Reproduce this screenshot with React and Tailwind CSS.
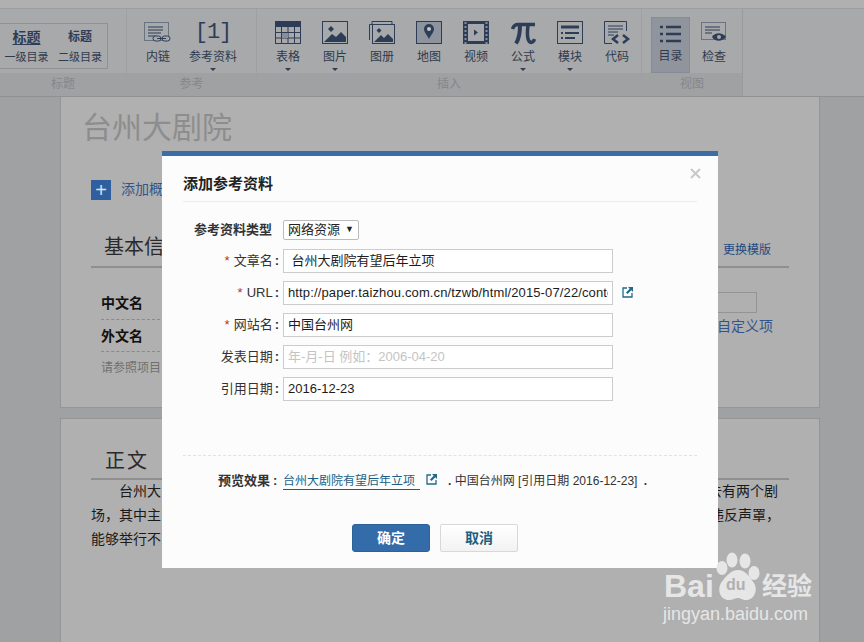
import React from 'react';

const cjk = "font-['Liberation_Sans','Noto_Sans_CJK_SC',sans-serif]";
const navy = '#2d3d58';

function ToolIcon({ name }) {
  const s = { fill: 'none', stroke: navy, strokeWidth: 1 };
  if (name === 'link') return (
    <svg width="28" height="22" viewBox="0 0 28 22"><rect x=".5" y=".5" width="24" height="18" fill="none" stroke={navy} strokeDasharray="1 1" /><path d="M4 5h15M4 8h15M4 11h13M4 14h8" stroke={navy} /><rect x="9" y="14" width="8" height="5" rx="2.5" fill="#a6a8ab" stroke={navy} /><rect x="18" y="14" width="8" height="5" rx="2.5" fill="#a6a8ab" stroke={navy} /><path d="M13 16.500h9" stroke={navy} /></svg>
  );
  if (name === 'table') return (
    <svg width="26" height="24" viewBox="0 0 26 24"><rect x=".5" y=".5" width="25" height="22" {...s} /><rect x="0" y="0" width="26" height="6" fill={navy} /><path d="M6.500 6v17M13 6v17M19.500 6v17M0 11.500h26M0 17h26" {...s} /><rect x="7" y="12" width="6" height="5" fill="#8b8e94" /></svg>
  );
  if (name === 'image') return (
    <svg width="26" height="24" viewBox="0 0 26 24"><rect x=".5" y=".5" width="25" height="22" {...s} /><path d="M2 21l8-8 4 3 5-5 5 5v5z" fill={navy} /><path d="M9 5l3 3-3 3-3-3z" fill={navy} /></svg>
  );
  if (name === 'album') return (
    <svg width="26" height="24" viewBox="0 0 26 24"><path d="M3 3V.500h20V3" {...s} /><path d="M.500 19V3.500H4" {...s} /><rect x="3.500" y="3.500" width="22" height="19" {...s} /><path d="M5 21l7-7 3 3 4-4 5 5v3z" fill={navy} /><path d="M10 7l2.500 2.500L10 12 7.500 9.500z" fill={navy} /></svg>
  );
  if (name === 'map') return (
    <svg width="26" height="24" viewBox="0 0 26 24"><rect x=".5" y=".5" width="25" height="22" fill="#8e949e" stroke={navy} /><path d="M13 3a5 5 0 0 1 5 5c0 3-3 6-5 10-2-4-5-7-5-10a5 5 0 0 1 5-5z" fill={navy} /><circle cx="13" cy="8" r="2" fill="#c5c8cc" /></svg>
  );
  if (name === 'video') return (
    <svg width="26" height="24" viewBox="0 0 26 24"><rect x="0" y="0" width="26" height="23" fill={navy} /><rect x="5" y="3" width="16" height="17" fill="#a6a8ab" /><path d="M1.500 2h2M1.500 6h2M1.500 10h2M1.500 14h2M1.500 18h2M1.500 22h2M22.500 2h2M22.500 6h2M22.500 10h2M22.500 14h2M22.500 18h2M22.500 22h2" stroke="#a6a8ab" strokeWidth="1.500" /><path d="M11 8.500l4 3-4 3z" fill={navy} /></svg>
  );
  if (name === 'pi') return (
    <svg width="26" height="24" viewBox="0 0 26 24"><path d="M2.500 8C3.500 5 5 3.500 8 3.500H25" fill="none" stroke={navy} strokeWidth="3.500" /><path d="M10 4C10 12 9 18 6 22.500" fill="none" stroke={navy} strokeWidth="4" /><path d="M18 4C17 12 17 21 21 21.500C23 21.500 24 20 24.500 18" fill="none" stroke={navy} strokeWidth="3.500" /></svg>
  );
  if (name === 'module') return (
    <svg width="26" height="24" viewBox="0 0 26 24"><rect x=".5" y=".5" width="25" height="22" {...s} /><path d="M4 6h18" stroke={navy} strokeWidth="3" /><path d="M4 12h2M8 12h14M4 17h2M8 17h10" stroke={navy} strokeWidth="2" /></svg>
  );
  if (name === 'code') return (
    <svg width="26" height="24" viewBox="0 0 26 24"><path d="M22.500 10V.500H.500v22H8" {...s} /><path d="M4 5h15M4 8h15M4 11h10M4 14h6" stroke={navy} /><path d="M14 14l-5 4 5 4M19 14l5 4-5 4" fill="none" stroke={navy} strokeWidth="2.500" /></svg>
  );
  if (name === 'toc') return (
    <svg width="22" height="20" viewBox="0 0 22 20"><path d="M0 2h3M6 2h15M0 9h3M6 9h15M0 16h3M6 16h15" stroke={navy} strokeWidth="2.500" /></svg>
  );
  return (
    <svg width="26" height="22" viewBox="0 0 26 22"><rect x=".5" y=".5" width="24" height="17" fill="none" stroke={navy} strokeDasharray="1 1" /><path d="M4 5h15M4 8h15M4 11h7" stroke={navy} /><path d="M11 15c3-5 10-5 14 0-4 5-11 5-14 0z" fill={navy} /><circle cx="18" cy="15" r="2" fill="#a6a8ab" /></svg>
  );
}

function Tool({ label, children, caret, className = '' }) {
  return (
    <div className={`w-[26px] flex flex-col items-center ${className}`}>
      <div className="h-[28px] flex items-center justify-center">{children}</div>
      <div className="text-[12px] leading-[16px] text-[#2f3b4d] mt-[2px] whitespace-nowrap">{label}</div>
      {caret && <div className="w-0 h-0 border-x-[3px] border-x-transparent border-t-[3px] border-t-[#2d3d58] mt-[3px]" />}
    </div>
  );
}

function OpenIcon({ className = '' }) {
  return (
    <svg className={className} width="12" height="12" viewBox="0 0 12 12"><path d="M5 2H1v9h9V7" fill="none" stroke="#1f6a8c" strokeWidth="1.300" /><path d="M6 1h5v5L9.300 4.300 5.500 8 4 6.500l3.700-3.800z" fill="#1f6a8c" /></svg>
  );
}

function Field({ label, required, children }) {
  return (
    <div className="flex items-center h-[24px]">
      <div className="w-[100px] text-right text-[13px] text-[#333] pr-[4px] whitespace-nowrap">
        {required && <span className="text-[#b5352c] mr-[4px]">*</span>}{label}<span className="font-bold ml-[2px]">:</span>
      </div>
      {children}
    </div>
  );
}

function Input({ value, placeholder, className = '' }) {
  return (
    <div className={`w-[330px] h-[24px] bg-white border border-[#cccccc] flex items-center px-[4px] text-[13px] ${placeholder ? 'text-[#c4c4c4]' : 'text-[#1c1c1c]'} ${className}`}>
      <div className="w-full overflow-hidden whitespace-nowrap">{value || placeholder}</div>
    </div>
  );
}

function Modal() {
  return (
    <div className="absolute left-[162px] top-[151px] w-[556px] h-[417px] bg-[#fcfcfc] border-t-[5px] border-[#3a6ea5] px-[21px]">
      <svg className="absolute right-[17px] top-[12px]" width="11" height="11" viewBox="0 0 11 11"><path d="M1 1l9 9M10 1l-9 9" stroke="#c8c8c8" strokeWidth="2" /></svg>
      <div className="h-[46px] border-b border-[#ececec] pt-[19px] text-[15px] leading-[18px] font-bold text-[#222] whitespace-nowrap">添加参考资料</div>
      <div className="mt-[17px] flex flex-col gap-[8px]">
        <div className="flex items-center h-[22px]">
          <div className="w-[88px] pl-[11px] text-[13px] font-bold text-[#333] whitespace-nowrap">参考资料类型</div>
          <div className="ml-[12px] w-[76px] h-[20px] border border-[#bbb] rounded-[2px] bg-white flex items-center px-[4px] text-[13px] text-[#222] whitespace-nowrap">网络资源<span className="ml-[5px] text-[9px]">▼</span></div>
        </div>
        <Field label="文章名" required><Input value={'\u00a0台州大剧院有望后年立项'} /></Field>
        <div className="flex items-center">
          <Field label="URL" required><Input className="tracking-[0.13px]" value="http://paper.taizhou.com.cn/tzwb/html/2015-07/22/content" /></Field>
          <OpenIcon className="ml-[9px] -mt-[2px]" />
        </div>
        <Field label="网站名" required><Input value="中国台州网" /></Field>
        <Field label="发表日期"><Input placeholder="年-月-日 例如：2006-04-20" /></Field>
        <Field label="引用日期"><Input value="2016-12-23" /></Field>
      </div>
      <div className="mt-[54px] border-t border-dashed border-[#e2e2e2] pt-[16px] pl-[35px] h-[50px] flex items-start text-[12px] leading-[18px] text-[#333] whitespace-nowrap">
        <span className="w-[65px] text-[13px] font-bold">预览效果<span className="ml-[3px]">:</span></span>
        <span className="text-[#1b5f85] border-b border-[#1b5f85] leading-[16px] pt-[1px] pr-[5px]">台州大剧院有望后年立项</span>
        <OpenIcon className="ml-[6px] mt-[1px]" />
        <span className="ml-[10px]"><b>.</b> 中国台州网 [引用日期 2016-12-23] <b className="ml-[3px]">.</b></span>
      </div>
      <div className="mt-[19px] flex justify-center gap-[10px] pr-[10px]">
        <div className="w-[78px] h-[28px] rounded-[3px] bg-[#336ca8] border border-[#2d6296] text-white text-[14px] font-bold flex items-center justify-center">确定</div>
        <div className="w-[78px] h-[28px] rounded-[2px] bg-gradient-to-b from-white to-[#f2f2f2] border border-[#d8d8d8] text-[#1d5f80] text-[14px] font-bold flex items-center justify-center">取消</div>
      </div>
    </div>
  );
}

function Watermark() {
  return (
    <div className="absolute left-[662px] top-[548px] w-[160px] h-[76px] text-[#e6e6e6]">
      <div className="absolute left-[2px] top-[21px] text-[32px] leading-[34px] font-bold font-['Liberation_Sans',sans-serif]">Bai</div>
      <svg className="absolute left-[52px] top-0" width="50" height="56" viewBox="0 0 50 56">
        <ellipse cx="8" cy="20" rx="5.500" ry="7" fill="#e6e6e6" />
        <ellipse cx="18" cy="12" rx="5.500" ry="7.500" fill="#e6e6e6" />
        <ellipse cx="31" cy="13" rx="5.500" ry="7.500" fill="#e6e6e6" />
        <ellipse cx="40" cy="25" rx="5.500" ry="7" fill="#e6e6e6" />
        <path d="M24 22c7 0 11 6 16 13 4 6 1 17-8 17-4 0-5-2-8-2s-5 2-9 2c-9 0-12-10-8-17 5-7 10-13 17-13z" fill="#e6e6e6" />
      </svg>
      <div className="absolute left-[64px] top-[28px] text-[#b0b0b0] text-[16px] leading-[18px] font-bold font-['Liberation_Sans',sans-serif]">du</div>
      <div className="absolute left-[100px] top-[23px] text-[25px] leading-[30px] font-bold whitespace-nowrap">经验</div>
      <div className="absolute left-[1px] top-[56px] text-[18px] leading-[20px] font-['Liberation_Sans',sans-serif] whitespace-nowrap">jingyan.baidu.com</div>
    </div>
  );
}

export default function App() {
  return (
    <div className={`relative w-[864px] h-[642px] overflow-hidden bg-[#9fa1a3] ${cjk}`}>
      <div className="h-[9px] bg-[#b0b0b0] border-b border-[#9d9ea0]" />
      {/* toolbar */}
      <div className="h-[88px] border-b border-[#909193] bg-[#a8a9ab] flex">
        <div className="w-[743px] flex border-r border-[#9a9b9d]">
          <div className="w-[127px] flex flex-col border-r border-[#9fa0a2]">
            <div className="h-[64px] pt-[14px]">
              <div className="w-[108px] h-[46px] border border-[#8f9193] border-l-0 flex pt-[4px]">
                <div className="w-[53px] text-center">
                  <div className="text-[14px] leading-[18px] font-bold text-[#2d3d58] underline underline-offset-2">标题</div>
                  <div className="text-[11px] leading-[16px] mt-[3px] text-[#2f3b4d] whitespace-nowrap">一级目录</div>
                </div>
                <div className="w-[54px] text-center">
                  <div className="text-[12px] leading-[18px] font-bold text-[#2d3d58]">标题</div>
                  <div className="text-[11px] leading-[16px] mt-[3px] text-[#2f3b4d] whitespace-nowrap">二级目录</div>
                </div>
              </div>
            </div>
            <div className="h-[23px] bg-[#a0a1a3] text-center text-[12px] leading-[23px] text-[#85878a]">标题</div>
          </div>
          <div className="w-[130px] flex flex-col border-r border-[#9fa0a2]">
            <div className="h-[64px] flex pt-[10px] pl-[18px] gap-[26px]">
              <Tool label="内链"><ToolIcon name="link" /></Tool>
              <Tool label="参考资料" caret className="ml-[3px]"><span className="text-[22px] leading-[26px] text-[#2d3d58] font-['Liberation_Mono',monospace] tracking-[-1px]">[1]</span></Tool>
            </div>
            <div className="h-[23px] bg-[#a0a1a3] text-center text-[12px] leading-[23px] text-[#85878a]">参考</div>
          </div>
          <div className="w-[385px] flex flex-col border-r border-[#9fa0a2]">
            <div className="h-[64px] flex pt-[10px] pl-[18px] gap-[21px]">
              <Tool label="表格" caret><ToolIcon name="table" /></Tool>
              <Tool label="图片" caret><ToolIcon name="image" /></Tool>
              <Tool label="图册"><ToolIcon name="album" /></Tool>
              <Tool label="地图"><ToolIcon name="map" /></Tool>
              <Tool label="视频"><ToolIcon name="video" /></Tool>
              <Tool label="公式" caret><ToolIcon name="pi" /></Tool>
              <Tool label="模块" caret><ToolIcon name="module" /></Tool>
              <Tool label="代码"><ToolIcon name="code" /></Tool>
            </div>
            <div className="h-[23px] bg-[#a0a1a3] text-center text-[12px] leading-[23px] text-[#85878a]">插入</div>
          </div>
          <div className="flex-1 flex flex-col">
            <div className="h-[64px] flex pt-[8px] pl-[9px] gap-[11px]">
              <div className="w-[39px] h-[56px] bg-[#8f949d] border border-[#878b93] flex flex-col items-center pt-[7px]">
                <ToolIcon name="toc" />
                <div className="text-[12px] leading-[16px] mt-[3px] text-[#2f3b4d]">目录</div>
              </div>
              <Tool label="检查" className="pt-[2px]"><ToolIcon name="check" /></Tool>
            </div>
            <div className="h-[23px] bg-[#a0a1a3] text-center text-[12px] leading-[23px] text-[#85878a]">视图</div>
          </div>
        </div>
      </div>

      {/* cards behind the dialog */}
      <div className="mx-[60px] w-[760px] h-[311px] bg-[#b0b0b0] border border-t-0 border-[#949597] relative">
        <div className="pl-[21px] pt-[12px] text-[30px] leading-[38px] text-[#8d8d8d]">台州大剧院</div>
        <div className="ml-[30px] mt-[32px] flex items-center gap-[10px]">
          <div className="w-[20px] h-[20px] bg-[#2f5f9e] flex items-center justify-center text-[#d8e0ea] text-[20px] leading-[20px]">+</div>
          <span className="text-[14px] text-[#34558a] whitespace-nowrap">添加概</span>
        </div>
        <div className="ml-[30px] mt-[31px] w-[698px] h-[37px] pt-[2px] border-b-2 border-[#8f8f8f] flex justify-between">
          <span className="ml-[13px] text-[20px] leading-[28px] text-[#2a2a2a]">基本信</span>
          <span className="text-[12px] leading-[28px] pt-[3px] mr-[18px] text-[#1e4a80]">更换模版</span>
        </div>
        <div className="ml-[40px] mt-[26px] w-[100px]">
          <div className="h-[26px] border-b border-dashed border-[#8a8a8a] text-[14px] leading-[18px] font-bold text-[#111]">中文名</div>
          <div className="h-[32px] border-b border-dashed border-[#8a8a8a] pt-[7px] text-[14px] leading-[18px] font-bold text-[#111]">外文名</div>
          <div className="pt-[7px] text-[12px] leading-[18px] text-[#707070] whitespace-nowrap">请参照项目</div>
        </div>
        <div className="absolute right-[62px] top-[195px] w-[40px] h-[21px] border border-[#949494]" />
        <div className="absolute right-[46px] top-[220px] text-[14px] leading-[18px] text-[#34558a]">自定义项</div>
      </div>
      <div className="mx-[60px] mt-[10px] w-[760px] h-[224px] bg-[#b0b0b0] border border-b-0 border-[#949597]">
        <div className="ml-[30px] mt-[27px] pt-[1px] w-[698px] h-[34px] border-b-2 border-[#8f8f8f]">
          <span className="ml-[14px] text-[20px] leading-[28px] text-[#2a2a2a] tracking-[2px]">正文</span>
        </div>
        <div className="ml-[30px] w-[698px] text-[14px] leading-[24px] text-[#1a1a1a] -mt-[1px]">
          <div className="pl-[28px] pr-[11px] flex justify-between"><span>台州大</span><span>去有两个剧</span></div>
          <div className="pr-[9px] flex justify-between"><span>场，其中主</span><span>违反声罩，</span></div>
          <div>能够举行不</div>
        </div>
      </div>

      <Modal />
      <Watermark />
    </div>
  );
}
